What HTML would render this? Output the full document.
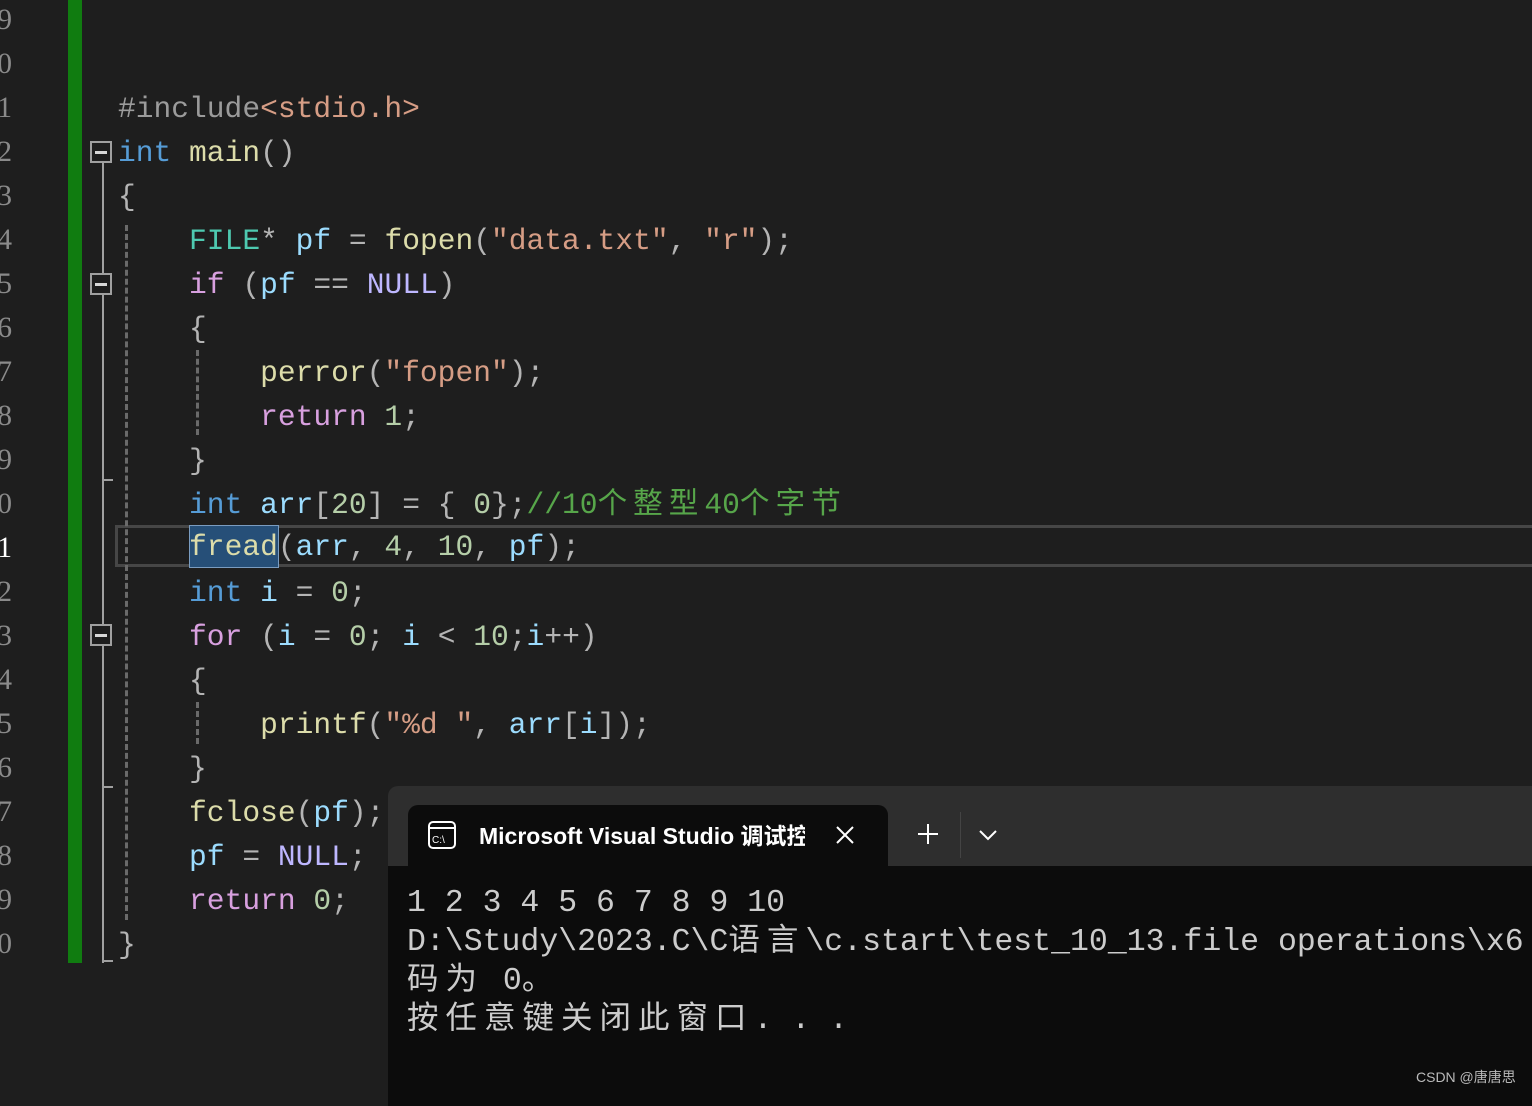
<!DOCTYPE html>
<html><head><meta charset="utf-8"><style>
html,body{margin:0;padding:0;}
body{width:1532px;height:1093px;background:#1e1e1e;position:relative;overflow:hidden;}
.ln{position:absolute;left:-40px;width:52px;text-align:right;font:29.6px/44px "Liberation Serif",serif;color:#8a8a8a;}
.c{position:absolute;left:118px;height:44px;margin-top:2px;font:29.6px/44px "Liberation Mono","Noto Sans CJK SC",monospace;color:#b4b4b4;white-space:pre;}
.k{color:#569cd6}.f{color:#dcdcaa}.t{color:#4ec9b0}.v{color:#9cdcfe}.ctl{color:#d8a0df}.n{color:#b5cea8}.s{color:#d69d85}.m{color:#beb7ff}.cm{color:#57a64a}.pp{color:#9b9b9b}
.cj{letter-spacing:6px}
.fold{position:absolute;left:90px;width:22px;height:22px;border:2px solid #a0a0a0;box-sizing:border-box;}
.fold:after{content:"";position:absolute;left:3px;top:8px;width:12px;height:3px;background:#d8d8d8;}
.vl{position:absolute;left:102px;width:2px;background:#a0a0a0;}
.tick{position:absolute;left:102px;width:11px;height:2px;background:#a0a0a0;}
.dash{position:absolute;width:0;border-left:3px dashed #6a6a6a;}
.term{position:absolute;left:388px;top:786px;width:1160px;height:320px;background:#2e2e2e;border-radius:10px 0 0 0;}
.tab{position:absolute;left:408px;top:805px;width:480px;height:70px;background:#0c0c0c;border-radius:10px 10px 0 0;}
.tbody{position:absolute;left:388px;top:866px;width:1160px;height:240px;background:#0c0c0c;}
.tl{position:absolute;left:407px;font:31.5px/39px "Liberation Mono","Noto Sans CJK SC",monospace;color:#cccccc;white-space:pre;}
.tl .cj{letter-spacing:7px}
</style></head><body>
<div class="ln" style="top:-2px">19</div>
<div class="ln" style="top:42px">20</div>
<div class="ln" style="top:86px">21</div>
<div class="ln" style="top:130px">22</div>
<div class="ln" style="top:174px">23</div>
<div class="ln" style="top:218px">24</div>
<div class="ln" style="top:262px">25</div>
<div class="ln" style="top:306px">26</div>
<div class="ln" style="top:350px">27</div>
<div class="ln" style="top:394px">28</div>
<div class="ln" style="top:438px">29</div>
<div class="ln" style="top:482px">30</div>
<div class="ln" style="top:526px;color:#fff">31</div>
<div class="ln" style="top:570px">32</div>
<div class="ln" style="top:614px">33</div>
<div class="ln" style="top:658px">34</div>
<div class="ln" style="top:702px">35</div>
<div class="ln" style="top:746px">36</div>
<div class="ln" style="top:790px">37</div>
<div class="ln" style="top:834px">38</div>
<div class="ln" style="top:878px">39</div>
<div class="ln" style="top:922px">40</div>
<div style="position:absolute;left:68px;top:0;width:14px;height:963px;background:#107c10"></div>

<div style="position:absolute;left:115px;top:525px;width:1430px;height:42px;border:3px solid #464646;box-sizing:border-box"></div>
<div style="position:absolute;left:189px;top:525px;width:90px;height:43px;background:#264f78;border:1px solid #7a9cc0;box-sizing:border-box"></div>

<div class="fold" style="top:141px"></div>
<div class="fold" style="top:273px"></div>
<div class="fold" style="top:624px"></div>
<div class="vl" style="top:163px;height:110px"></div>
<div class="vl" style="top:295px;height:329px"></div>
<div class="vl" style="top:646px;height:317px"></div>
<div class="tick" style="top:479px"></div>
<div class="tick" style="top:786px"></div>
<div class="tick" style="top:960px"></div>
<div class="dash" style="left:125px;top:225px;height:695px"></div>
<div class="dash" style="left:196px;top:350px;height:85px"></div>
<div class="dash" style="left:196px;top:702px;height:42px"></div>

<div class="c" style="top:85px"><span class="pp">#include</span><span class="s">&lt;stdio.h&gt;</span></div>
<div class="c" style="top:129px"><span class="k">int</span> <span class="f">main</span>()</div>
<div class="c" style="top:173px">{</div>
<div class="c" style="top:217px">    <span class="t">FILE</span>* <span class="v">pf</span> = <span class="f">fopen</span>(<span class="s">"data.txt"</span>, <span class="s">"r"</span>);</div>
<div class="c" style="top:261px">    <span class="ctl">if</span> (<span class="v">pf</span> == <span class="m">NULL</span>)</div>
<div class="c" style="top:305px">    {</div>
<div class="c" style="top:349px">        <span class="f">perror</span>(<span class="s">"fopen"</span>);</div>
<div class="c" style="top:393px">        <span class="ctl">return</span> <span class="n">1</span>;</div>
<div class="c" style="top:437px">    }</div>
<div class="c" style="top:481px">    <span class="k">int</span> <span class="v">arr</span>[<span class="n">20</span>] = { <span class="n">0</span>};<span class="cm">//10<span class="cj">个整型</span>40<span class="cj">个字节</span></span></div>
<div class="c" style="top:523px">    <span class="f">fread</span>(<span class="v">arr</span>, <span class="n">4</span>, <span class="n">10</span>, <span class="v">pf</span>);</div>
<div class="c" style="top:569px">    <span class="k">int</span> <span class="v">i</span> = <span class="n">0</span>;</div>
<div class="c" style="top:613px">    <span class="ctl">for</span> (<span class="v">i</span> = <span class="n">0</span>; <span class="v">i</span> &lt; <span class="n">10</span>;<span class="v">i</span>++)</div>
<div class="c" style="top:657px">    {</div>
<div class="c" style="top:701px">        <span class="f">printf</span>(<span class="s">"%d "</span>, <span class="v">arr</span>[<span class="v">i</span>]);</div>
<div class="c" style="top:745px">    }</div>
<div class="c" style="top:789px">    <span class="f">fclose</span>(<span class="v">pf</span>);</div>
<div class="c" style="top:833px">    <span class="v">pf</span> = <span class="m">NULL</span>;</div>
<div class="c" style="top:877px">    <span class="ctl">return</span> <span class="n">0</span>;</div>
<div class="c" style="top:921px">}</div>

<div class="term"></div>
<div class="tab"></div>
<div class="tbody"></div>
<svg style="position:absolute;left:427px;top:820px" width="30" height="30" viewBox="0 0 30 30"><rect x="2" y="2" width="26" height="26" rx="4" fill="none" stroke="#fff" stroke-width="2"/><line x1="2" y1="8" x2="28" y2="8" stroke="#fff" stroke-width="2"/><text x="5" y="23" font-family="Liberation Sans" font-size="10" fill="#fff">C:\</text></svg>
<div style="position:absolute;left:479px;top:820px;width:326px;overflow:hidden;white-space:nowrap;font:bold 23px/32px 'Liberation Sans','Noto Sans CJK SC',sans-serif;color:#fff">Microsoft Visual Studio 调试控制台</div>
<svg style="position:absolute;left:835px;top:825px" width="20" height="20"><path d="M2 2L18 18M18 2L2 18" stroke="#fff" stroke-width="2"/></svg>
<svg style="position:absolute;left:916px;top:822px" width="24" height="24"><path d="M12 2V22M2 12H22" stroke="#fff" stroke-width="2"/></svg>
<div style="position:absolute;left:960px;top:812px;width:1px;height:46px;background:#444"></div>
<svg style="position:absolute;left:978px;top:828px" width="20" height="14"><path d="M2 3L10 11L18 3" stroke="#fff" stroke-width="2" fill="none"/></svg>

<div class="tl" style="top:884px">1 2 3 4 5 6 7 8 9 10</div>
<div class="tl" style="top:923px">D:\Study\2023.C\C<span class="cj">语言</span>\c.start\test_10_13.file operations\x6</div>
<div class="tl" style="top:962px"><span class="cj">码为</span> 0<span class="cj">。</span></div>
<div class="tl" style="top:1001px"><span class="cj">按任意键关闭此窗口</span>. . .</div>
<div style="position:absolute;left:1416px;top:1067px;font:14px 'Liberation Sans','Noto Sans CJK SC',sans-serif;color:#bbb">CSDN @唐唐思</div>
</body></html>
